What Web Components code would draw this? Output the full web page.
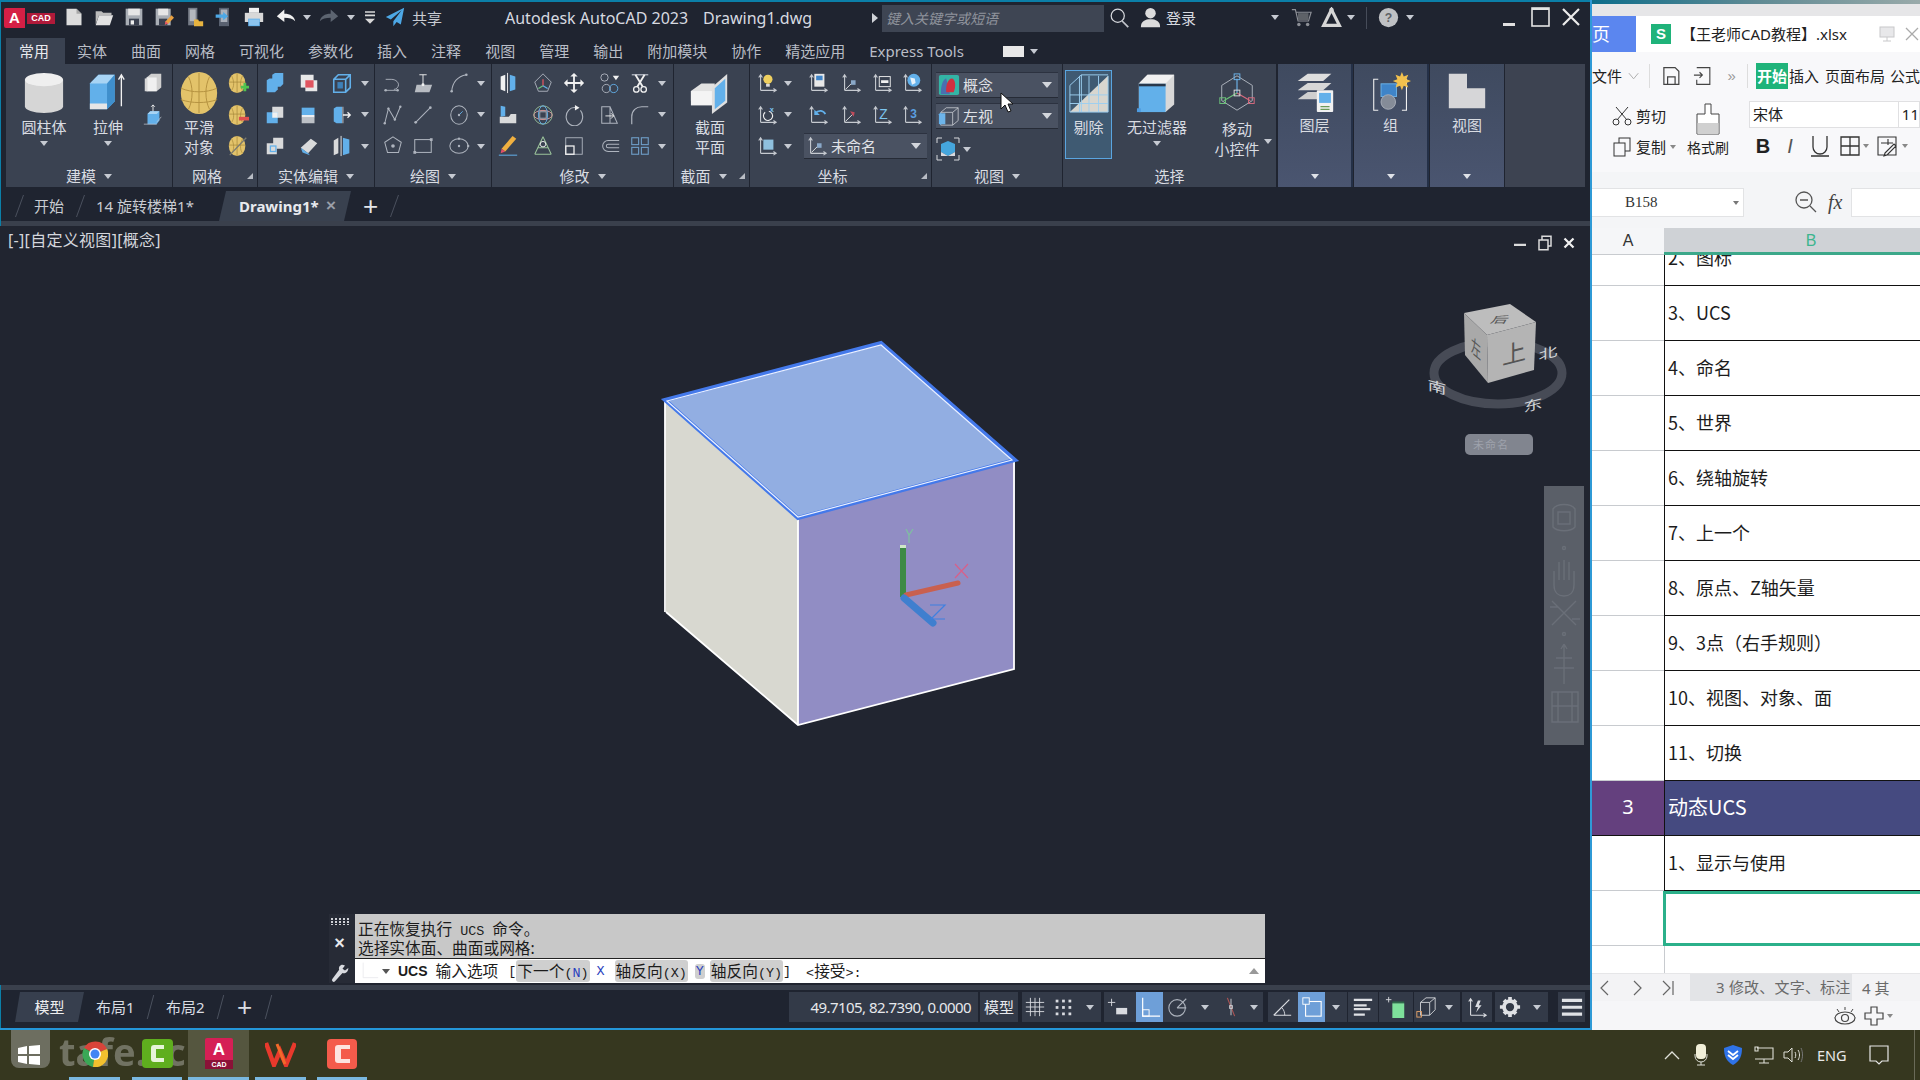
<!DOCTYPE html>
<html lang="zh"><head><meta charset="utf-8"><title>AutoCAD</title>
<style>
html,body{margin:0;padding:0;background:#36371f;width:1920px;height:1080px;overflow:hidden;font-family:"Noto Sans","Noto Sans CJK SC",sans-serif;}
</style>
<script>
const g='#d9dadb',b='#62b0ea',l='#aeb4be',y='#e3c36a',w='#f1f1f1',t='#8f98a6';
const st=(d,c=l,sw=1.3)=>`<path d="${d}" fill="none" stroke="${c}" stroke-width="${sw}"/>`;
const fi=(d,c=g)=>`<path d="${d}" fill="${c}"/>`;
const ballBase=`<ellipse cx="11" cy="12" rx="9" ry="11" fill="${y}"/>`+st('M2 11h18M11 1v22M5 4c3 6 3 12 0 16M17 4c-3 6-3 12 0 16','#a98a3c',.8);
const ucsA=st('M5 20V4M3 6l2-3 2 3M5 20h16M19 18l3 2-3 2','#c6cad0',1.2);
const I={
/* big icons, 44 box */
cyl:[44,fi('M2 8v28c0 4 9 7 20 7s20-3 20-7V8z','#d6d6d6')+`<ellipse cx="22" cy="8" rx="20" ry="7" fill="#efefef"/>`],
ext:[44,fi('M3 12L12 3h17v28l-8 8H3z',b)+fi('M3 12L12 3h17l-8 9z','#a8d4f4')+fi('M21 12l8-9v28l-8 8z','#3f8fcc')+fi('M3 33h18v6H3z','#e6e6e6')+st('M36 36V4M33 8l3-5 3 5',w,1.4)],
ball:[44,`<ellipse cx="22" cy="22" rx="19" ry="22" fill="${y}"/>`+st('M3 17c12 5 26 5 38 0M3 29c12 4 26 4 38 0M22 1v42M11 5c5 10 5 24 0 34M33 5c-5 10-5 24 0 34','#b3913f',1)],
sect:[44,fi('M2 20l11-8h14v18H2z','#e2e2e2')+fi('M2 20h25v15H2z','#f4f4f4')+fi('M24 16L40 2v30L24 44z','#dfdfdf')+fi('M27 17L38 7v23L27 39z',b)],
cull:[44,fi('M2 42L42 4v38z','#d8d6cf')+st('M2 14L14 3h28M2 14v28h40V4M2 24h40M2 33h40M12 4v38M22 4v38M32 4v38M14 3v39','#9ccff0',1)],
nof:[44,fi('M3 12l9-9h28v31l-9 8H3z','#d8d8d8')+fi('M3 12h28v30H3z',b)+fi('M3 12h28v3H3z','#28384c')+fi('M3 12l9-9h28l-9 9z',w)+fi('M1 38h4v4H1z','#4d9be0')],
giz:[44,st('M22 4l16 10v16L22 40 6 30V14z','#aeb4be',1)+st('M22 22V7','#6db4ea',1.2)+st('M22 22L8 30','#6cc27a',1.2)+st('M22 22l14 8','#d86a7e',1.2)+`<rect x="19" y="2" width="6" height="6" fill="none" stroke="#6db4ea"/><rect x="19" y="19" width="6" height="6" fill="none" stroke="#ddd"/><rect x="4" y="27" width="6" height="6" fill="none" stroke="#6cc27a"/><rect x="34" y="27" width="6" height="6" fill="none" stroke="#d86a7e"/>`],
lay:[44,fi('M3 30L14 22h26l-9 8z','#cfcfcf')+fi('M3 20L14 12h26l-9 8z','#d7d7d7')+fi('M3 10L14 2h26l-9 8z','#dedede')+`<rect x="24" y="20" width="18" height="24" rx="1" fill="#f1f1f1"/><rect x="26.5" y="23" width="13" height="11" fill="${b}"/><path d="M28 38h10M28 41h10" stroke="#6a9a5a" stroke-width="1.4"/>`],
grp:[44,st('M8 8H3v34h5M34 8h5v34h-5',w,1.2)+`<rect x="11" y="13" width="17" height="14" fill="#3f84c8" stroke="#6db4ea"/><circle cx="19" cy="33" r="8" fill="#858c98" stroke="#aab0ba"/><path d="M34 0l2 5 5-2-2 5 5 2-5 2 2 5-5-2-2 5-2-5-5 2 2-5-5-2 5-2-2-5 5 2z" fill="#f2c14e"/>`],
lshp:[44,fi('M2 2h20v16h20v22H2z','#d6d6d8')],
/* small icons, 24 box */
pres:[24,fi('M5 6l5-4h11v15l-5 4H5z','#cfcfcf')+fi('M5 6h11v15H5z','#f0f0f0')+fi('M3 7h3v14H3z','#d8d8d8')],
pp:[24,fi('M6 11l3-3h10v10l-3 4H6z',b)+fi('M6 11l3-3h10l-3 3z','#a8d4f4')+st('M12 8V1M10 3l2-2 2 2',w,1)+st('M2 22h14M16 20l5-6','#c0c4cc',.8)],
bp:[24,ballBase+fi('M15 15h3v-3h3v3h3v3h-3v3h-3v-3h-3z','#4fc24f')],
bm:[24,ballBase+fi('M13 14h11v4H13z','#e0504f')],
bx:[24,ballBase+st('M3 22L21 3','#7a7a70',1.4)],
un:[24,fi('M9 3l3-2h9v12l-3 3H9z',b)+fi('M3 9l3-2h9v12l-3 3H3z',b)],
su:[24,fi('M3 3h14v14H3z','#e8e8e8')+fi('M8 9h13v12H8z','#e8e8e8')+fi('M8 9h9v8H8z','#e05560')],
wbox:[24,st('M3 8l5-5h13v14l-5 5H3zM3 8h13v14M16 8l5-5',b,1.7)+fi('M7 11h6v7H7z','#3d80b8')],
in1:[24,fi('M9 3h12v12H9z',g)+fi('M3 9h12v12H3z',b)+fi('M9 9h6v6H9z',w)],
bx2:[24,fi('M4 4h14v8H4z',b)+fi('M4 12h14v3H4z','#edeff2')+fi('M4 15h14v6H4z','#bcc0c6')],
arr:[24,fi('M3 5l3-2h6v18H6l-3 -2z',b)+st('M13 12h8M18 9l3 3-3 3',w,1.4)+st('M13 3v18',w,.8)],
cp1:[24,fi('M10 3h11v12H10z',g)+fi('M3 9h11v12H3z',g)+`<rect x="7" y="12" width="6" height="6" fill="none" stroke="${b}" stroke-width="1.4"/>`],
ers:[24,fi('M3 14L14 4l7 5-10 11z',g)+fi('M3 14l8 6 2 2-8-3z',b)],
spl:[24,fi('M3 6l5-3v17l-5 2z',g)+fi('M13 3l7 2v15l-7 2z',b)+st('M11 1v22',w,1)],
parc:[24,st('M3 20h14M4 8h6c6 0 8 4 8 6s-2 5-5 5',l,1)+`<circle cx="4" cy="20" r="1.4" fill="${l}"/><circle cx="17" cy="20" r="1.4" fill="${l}"/>`],
plane:[24,fi('M5 14L3 22h16l3-8z','#b8bcc2')+st('M12 14V3M8 3h8',w,1)+`<circle cx="12" cy="14" r="1.6" fill="${w}"/>`],
arc:[24,st('M4 21C5 11 10 5 20 3',l,1.1)+`<circle cx="4" cy="21" r="1.4" fill="${l}"/><circle cx="20" cy="3" r="1.4" fill="${l}"/>`],
pl:[24,st('M3 21L7 5l7 12 6-14',l,1.1)+`<circle cx="7" cy="5" r="1.3" fill="${l}"/><circle cx="14" cy="17" r="1.3" fill="${l}"/><circle cx="3" cy="21" r="1.3" fill="${l}"/><circle cx="20" cy="3" r="1.3" fill="${l}"/>`],
lin:[24,st('M4 20L20 4',l,1.1)+`<circle cx="4" cy="20" r="1.5" fill="${l}"/><circle cx="20" cy="4" r="1.5" fill="${l}"/>`],
cir:[24,`<ellipse cx="12" cy="12" rx="9" ry="10" fill="none" stroke="${l}" stroke-width="1.1"/><path d="M12 12l4-4" stroke="${b}"/><circle cx="12" cy="12" r="1.3" fill="${l}"/>`],
pen:[24,st('M12 2l9 6-3 11H6L3 8z',l,1.1)+`<circle cx="12" cy="12" r="2" fill="${l}"/>`],
rec:[24,`<rect x="3" y="5" width="18" height="14" fill="none" stroke="${l}" stroke-width="1.1"/><rect x="1.5" y="17.5" width="3" height="3" fill="${l}"/><rect x="19.5" y="3.5" width="3" height="3" fill="${l}"/>`],
elp:[24,`<ellipse cx="12" cy="12" rx="10" ry="8" fill="none" stroke="${l}" stroke-width="1.1"/><circle cx="12" cy="12" r="1.3" fill="${l}"/><circle cx="12" cy="4" r="1.3" fill="${l}"/><circle cx="22" cy="12" r="1.3" fill="${l}"/>`],
mir:[24,fi('M4 5l5-2v18l-5-2z',w)+fi('M14 3l6 2v14l-6 2z',b)+st('M11.500 1v22',w,1)],
m3d:[24,st('M12 2L3 11l4 10h10l4-10z',l,1)+st('M12 8v7',"#e05560",1.4)+st('M12 15l-5 3',"#6cc27a",1.4)+st('M12 15l5 3',b,1.4)],
mov:[24,fi('M12 1l4 4h-3v6h6V8l4 4-4 4v-3h-6v6h3l-4 4-4-4h3v-6H5v3l-4-4 4-4v3h6V5H8z',w)],
cop:[24,`<circle cx="6" cy="6" r="4" fill="none" stroke="${l}"/><circle cx="8" cy="18" r="4.500" fill="none" stroke="${l}"/><circle cx="16" cy="18" r="4.500" fill="none" stroke="${b}"/>`+fi('M15 4h7l-3.500 5z',w)],
tri:[24,st('M3 3h18',l,1.5)+st('M7 3l8 13M17 3L9 16',w,2)+`<circle cx="8" cy="19" r="3" fill="none" stroke="${w}" stroke-width="1.4"/><circle cx="16" cy="19" r="3" fill="none" stroke="${w}" stroke-width="1.4"/>`],
ali:[24,fi('M4 2l5 1v10l-5 1z',b)+fi('M3 14h10l2-3h6v10H3z',g)],
r3d:[24,`<circle cx="12" cy="12" r="10" fill="none" stroke="#9bc49b" stroke-width="1"/><ellipse cx="12" cy="12" rx="10" ry="5" fill="none" stroke="#d89a9a" stroke-width="1"/><ellipse cx="12" cy="12" rx="5" ry="10" fill="none" stroke="${b}" stroke-width="1"/><rect x="8.500" y="8.500" width="7" height="7" fill="none" stroke="${l}"/>`],
rot:[24,st('M19 7a9 10 0 1 1-5-3',l,1.2)+fi('M13 1l5 3-5 3z',w)],
str:[24,st('M3 3h9v18H3zM12 3l8 18h-8',l,1.1)+st('M7 13h9M13 10l3 3-3 3',w,1)],
fil:[24,st('M3 22V14C3 7 8 3 14 3h7',l,1.3)],
pcl:[24,fi('M17 1l4 3L9 18l-4-3z','#f0b040')+fi('M5 15l4 3-5 2z','#e2506a')+st('M2 22h20',b,1.1)],
tgl:[24,st('M12 2L3 21M12 2l9 19M6 14h12M3 21h18',"#9bc49b",1.1)+`<circle cx="12" cy="10" r="3" fill="none" stroke="${w}"/>`],
scl:[24,`<rect x="3" y="3" width="18" height="18" fill="none" stroke="${l}"/><rect x="3" y="12" width="9" height="9" fill="none" stroke="${w}" stroke-width="1.4"/>`],
ofs:[24,st('M22 6H10a6 6 0 0 0 0 12h12M22 10H10a2 2 0 0 0 0 4h12',l,1.1)],
ary:[24,`<g fill="none" stroke="#6f9ec8" stroke-width="1.2"><rect x="3" y="3" width="7.500" height="7.500"/><rect x="13.500" y="3" width="7.500" height="7.500"/><rect x="3" y="13.500" width="7.500" height="7.500"/><rect x="13.500" y="13.500" width="7.500" height="7.500"/></g>`],
bulb:[24,ucsA+`<circle cx="13" cy="8" r="5" fill="#efd060"/><rect x="11" y="13" width="4" height="3" fill="#ddd"/>`],
dc:[24,ucsA+`<rect x="8" y="2" width="11" height="14" fill="#e8e8e8"/><rect x="10" y="4" width="7" height="5" fill="#3f84c8"/>`],
x1:[24,ucsA+st('M6 19l8-8','#e8e8e8',1)+fi('M12 9h5v5h-5z','#8aa8c8')],
vw:[24,ucsA+`<rect x="9" y="5" width="12" height="11" fill="none" stroke="${w}"/><rect x="11" y="9" width="8" height="3" fill="${w}"/>`],
wd:[24,ucsA+`<circle cx="14" cy="9" r="7" fill="${b}"/><path d="M10 6l5 1 1 5-4 2z" fill="#e6f2fb"/>`],
rx:[24,ucsA+st('M14 8a5 5 0 1 1-4 1',w,1.2)+`<text x="15" y="9" font-size="8" font-weight="700" fill="#7dc6f0" font-family="Liberation Sans">x</text>`],
pv:[24,ucsA+st('M20 11c-2-4-7-5-11-1',b,2)+fi('M8 6v6h6z',b)],
x2:[24,ucsA+st('M6 19l8-8','#e8e8e8',1)+fi('M11 8l5 1-1 5z','#c04a5a')],
zz:[24,ucsA+`<text x="9" y="16" font-size="15" fill="#7dc6f0" font-family="Liberation Sans">Z</text>`],
th:[24,ucsA+`<text x="10" y="15" font-size="13" font-weight="700" fill="#5b9fe0" font-family="Liberation Sans">3</text>`],
bx3:[24,ucsA+fi('M8 5h11v11H8z','#8fc0de')],
und:[24,fi('M1 11l9-8v5c7 0 12 3 13 9-3-3-7-4-13-4v5z',w)],
red:[24,fi('M23 11l-9-8v5C7 8 2 11 1 17c3-3 7-4 13-4v5z','#5c6470')],
mnu:[24,fi('M6 5h12v2H6zM6 9h12v2H6zM6 14h12l-6 6z','#d8d8d8')],
shr:[24,fi('M23 1L1 12l6 3 13-11-10 13v6l4-5 5 3z','#4da8e6')],
nw:[24,fi('M3 2h12l6 6v14H3z','#dcdcdc')+fi('M15 2l6 6h-6z','#a8a8a8')],
opn:[24,fi('M2 5h7l2 2h10v3H6L2 21z','#bbb')+fi('M6 10h17l-4 12H2z','#e2e2e2')],
sav:[24,fi('M2 2h20v20H2z','#a9aeb5')+fi('M5 2h14v8H5z','#e6e6e6')+fi('M6 14h12v8H6z','#3b4150')+fi('M8 16h4v5H8z','#eee')],
sva:[24,fi('M2 2h18v20H2z','#a9aeb5')+fi('M5 2h12v8H5z','#e6e6e6')+fi('M6 14h10v8H6z','#3b4150')+fi('M13 21l1-4 7-7 3 3-7 7z','#e8a040')+fi('M13 21l1-4 3 3z','#e2506a')],
web:[24,fi('M5 1h11v21H5z','#777d88')+fi('M7 3h7v14H7z','#b4b8be')+fi('M12 15h5l1 2h5v6H12z','#e8b440')],
mob:[24,fi('M6 1h12v22H6z','#596170')+fi('M8 3h8v15H8z','#aab0ba')+fi('M2 9h9V6l6 5-6 5v-3H2z','#4da8e6')],
prt:[24,fi('M6 1h12v6H6z','#f0f0f0')+fi('M1 7h22v11H1z','#d8d8d8')+fi('M5 14h14v9H5z',b)+fi('M6 15h12v7H6z','#8cc4ee')],
srch:[24,`<circle cx="10" cy="10" r="7.500" fill="none" stroke="#d8dadf" stroke-width="1.400"/>`+st('M15 16l7 7','#c2c5cb',2)],
usr:[24,`<circle cx="12" cy="7" r="6" fill="#dcdcdc"/>`+fi('M1 23c0-7 5-9 11-9s11 2 11 9z','#dcdcdc')],
cart:[24,st('M1 3h4l3 13h12l3-10H6','#8d9097',1.3)+`<rect x="8" y="7" width="12" height="8" fill="#5e6268"/><circle cx="9" cy="20" r="2" fill="#8d9097"/><circle cx="19" cy="20" r="2" fill="#8d9097"/>`],
a360:[24,`<path d="M12 3L3 21h18z" fill="none" stroke="#d6d6d6" stroke-width="3.600"/><circle cx="12" cy="3.500" r="2.600" fill="#d6d6d6"/>`],
hlp:[24,`<circle cx="12" cy="12" r="11" fill="#bfc1c4"/><text x="12" y="17" text-anchor="middle" font-size="14" fill="#5e6167" font-family="Liberation Sans" font-weight="700">?</text>`],
wmin:[24,fi('M6 18h12v3H6z','#e0e0e0')],
wmax:[24,`<rect x="4" y="3" width="17" height="18" fill="none" stroke="#e4e4e4" stroke-width="1.600"/><path d="M4 4h17" stroke="#e4e4e4" stroke-width="2"/>`],
wcls:[24,st('M4 4l16 16M20 4L4 20','#ececec',2.200)],
vmin:[24,fi('M4 13h16v3H4z','#dcdcdc')],
vres:[24,`<rect x="8" y="3" width="12" height="13" fill="none" stroke="#dcdcdc" stroke-width="2"/><rect x="4" y="8" width="12" height="13" fill="#222631" stroke="#dcdcdc" stroke-width="2"/>`],
vcls:[24,st('M6 6l12 12M18 6L6 18','#f0f0f0',3)],
mcon:[24,`<rect x="1" y="1" width="22" height="22" rx="2" fill="#33b5a6"/>`+fi('M3 22c0-10 3-17 6-17l4 17z','#4a6fb0')+fi('M9 20c-1-7 2-15 6-15s5 9 2 15z','#d03040')],
mwire:[24,st('M3 8l6-5h13v14l-6 5H3zM3 8h13v14M16 8l6-5',"#c6cad0",.9)+fi('M3 8l-2 2v10l2 2z',b)+fi('M2 9h6v12H2z','#6db4ea')],
mcam:[24,`<g stroke="#d8dadf" fill="none"><path d="M1 6V1h5M18 1h5v5M1 18v5h5M18 23h5v-5"/></g><path d="M12 4l7 3v8l-7 4-7-4V7z" fill="#45a6dd"/><path d="M5 15l7 4 7-4v4H5z" fill="#d8dadf"/>`],
/* status */
sgrid:[24,st('M7 2v20M12 2v20M17 2v20M2 7h20M2 12h20M2 17h20','#d9dbe0',1)],
sdot:[24,`<g fill="#d9dbe0"><rect x="4" y="4" width="3" height="3"/><rect x="11" y="4" width="3" height="3"/><rect x="18" y="4" width="3" height="3"/><rect x="4" y="11" width="3" height="3"/><rect x="11" y="11" width="3" height="3"/><rect x="18" y="11" width="3" height="3"/><rect x="4" y="18" width="3" height="3"/><rect x="11" y="18" width="3" height="3"/><rect x="18" y="18" width="3" height="3"/></g>`],
sinf:[24,st('M5 3v8M1 7h8','#d9dbe0',1)+fi('M10 13h12v7H10z','#d9dbe0')],
sort:[24,st('M4 2v20h19','#fff',1.3)+`<rect x="4" y="15" width="7" height="7" fill="none" stroke="#fff"/>`],
spol:[24,`<circle cx="11" cy="13" r="9" fill="none" stroke="#aeb4be" stroke-width="1.200"/>`+st('M11 13L21 3M11 13h10','#aeb4be',1.200)],
siso:[24,st('M8 2l8 20','#b05555',1.200)+st('M12 3v18','#d0d2d6',1)+`<rect x="10.500" y="10.500" width="3" height="3" fill="none" stroke="#d0d2d6"/>`],
sang:[24,st('M3 21L20 4M3 21h19','#d9dbe0',1.300)+st('M12 13c2 2 3 5 3 8','#d9dbe0',1)],
ssel:[24,`<rect x="5" y="6" width="17" height="16" fill="none" stroke="#fff" stroke-width="1.200"/><rect x="2" y="2" width="7" height="7" fill="#6ea0d8" stroke="#fff"/>`],
slin:[24,fi('M2 3h20v2.500H2zM2 9h14v2.500H2zM2 13h18v2.500H2zM2 19h12v2.500H2z','#dfe1e5')],
sgrn:[24,st('M4 1v6M1 4h6','#d9dbe0',1)+fi('M8 6h13v2H8z','#2e6a4a')+fi('M8 8h13v16H8z','#7ee09b')],
scub:[24,st('M6 7l6-5h10v13l-6 6H6zM6 7h10v14M16 7l6-5','#d0d2d6',1)+`<rect x="2" y="17" width="5" height="6" fill="none" stroke="#e8a46a"/>`],
sucs:[24,st('M5 21V3M3 6l2-3 2 3M5 21h17M19 19l3 2-3 2','#d9dbe0',1.200)+fi('M13 5l-3 7h3l-2 6 6-8h-3l2-5z','#d9dbe0')],
sgear:[24,`<circle cx="12" cy="12" r="6.500" fill="none" stroke="#dfe1e5" stroke-width="4"/><path d="M10 1h4v4h-4zM10 19h4v4h-4zM1 10h4v4H1zM19 10h4v4h-4zM4 6l3-3 3 3-3 3zM14 6l3-3 3 3-3 3zM4 18l3-3 3 3-3 3zM14 18l3-3 3 3-3 3z" fill="#dfe1e5"/>`],
sham:[24,fi('M1 3h22v3.500H1zM1 10.500h22v3.500H1zM1 18h22v3.500H1z','#e0e2e6')],
wrn:[24,fi('M15 2c-3 0-5 3-4 6L3 19a2 2 0 0 0 3 3l9-10c3 1 7-1 7-6l-4 3-3-2 3-4z','#d8dadf')],
cmdi:[24,st('M5 2v18h18','#e8e8ec',1)]
};
function def(tag,css,render){customElements.define(tag,class extends HTMLElement{connectedCallback(){if(this.shadowRoot)return;const r=this.attachShadow({mode:'open'});r.innerHTML=`<style>${css}</style>`+render(this);}});}
const A=(e,n,d='')=>e.getAttribute(n)??d;

def('cad-icon',':host{display:inline-flex;flex:none}svg{display:block}',e=>{const i=I[A(e,'name')]||[24,''];const s=A(e,'size','22');return `<svg width="${s}" height="${s}" viewBox="0 0 ${i[0]} ${i[0]}">${i[1]}</svg>`;});
def('cad-caret',':host{display:block;flex:none;width:0;height:0;border:4px solid transparent;border-bottom:0;border-top:5px solid var(--c,#c6cad2)}',()=>'');
def('ic-row',`:host{display:grid;align-self:flex-start;grid-auto-rows:var(--rowh,31.5px);align-items:center;justify-items:center}
.on{display:flex;width:100%;height:100%;align-items:center;justify-content:center;background:#6e9fd8}::slotted(*){justify-self:stretch}`,e=>{
 const cols=A(e,'cols').split(/\s+/).map(x=>x+'px').join(' ');const s=A(e,'size','22');
 const cell=k=>{if(k==='_')return '<span></span>';if(k==='v')return '<cad-caret></cad-caret>';if(k[0]==='!')return `<div class="on"><cad-icon name="${k.slice(1)}" size="${s}"></cad-icon></div>`;return `<cad-icon name="${k}" size="${s}"></cad-icon>`;};
 return `<style>:host{grid-template-columns:${cols}}</style>`+A(e,'icons').trim().split(/\s+/).map(cell).join('')+'<slot></slot>';});

def('cad-window',`:host{display:flex;flex-direction:column;position:relative;width:1590px;height:1030px;flex:none;background:#1f2430;color:#d9dce2;overflow:hidden}
.bt{position:absolute;left:0;right:0;top:0;height:2px;background:#0b7fa8}.bl{position:absolute;left:0;top:0;bottom:0;width:1px;background:#0b7fa8}.bb{position:absolute;left:0;right:0;bottom:0;height:2px;background:#2496d8}
.cur{position:absolute;left:1000px;top:92px}`,()=>`<div class="bt"></div><div class="bl"></div><div class="bb"></div><slot></slot>
<svg class="cur" width="14" height="22" viewBox="0 0 14 22"><path d="M1 1v16l4-4 3 7 3-1-3-7h5z" fill="#fff" stroke="#111" stroke-width="1"/></svg>`);

def('title-bar',`:host{display:flex;align-items:center;height:36px;margin-top:2px;padding-bottom:4px;box-sizing:border-box;flex:none;font-size:15px;line-height:20px;color:#d7dae0;--rowh:30px}
.logo{width:59px;display:flex;align-items:center;flex:none;padding-left:4px;box-sizing:border-box}
.a{width:21px;height:20px;background:#d51f45;color:#fff;font:700 15px/20px "Liberation Sans";text-align:center;border-radius:2px 0 0 2px}
.cad{margin-left:2px;width:28px;height:11px;background:#b01a3a;color:#fff;font:700 9px/11px "Liberation Sans";text-align:center}
.sh{margin-left:7px;width:30px;white-space:nowrap;color:#c9ccd2}
.t1{margin-left:63px;width:198px;font-size:16px;white-space:nowrap}.t2{width:169px;font-size:16px;white-space:nowrap}
.tri{width:0;height:0;border:5px solid transparent;border-left:6px solid #d0d3d8;border-right:0;margin-right:4px}
.s{margin-left:0;width:222px;height:27px;background:#3e4553;font-style:italic;font-size:14px;line-height:27px;color:#8f939c;padding-left:4px;box-sizing:border-box;flex:none}
.in{width:103px;flex:none;white-space:nowrap}.sp{width:1px;height:22px;background:#464c59;margin:0 5px}`,()=>`
<div class="logo"><div class="a">A</div><div class="cad">CAD</div></div>
<ic-row size="20" cols="30 30 30 30 30 30 30 34 8 36 8 30 20" icons="nw opn sav sva web mob prt und v red v mnu shr"></ic-row>
<div class="sh">共享</div><div class="t1">Autodesk AutoCAD 2023</div><div class="t2">Drawing1.dwg</div><div class="tri"></div>
<div class="s">键入关键字或短语</div>
<ic-row size="21" cols="30 32" icons="srch usr" style="margin-left:0"></ic-row><div class="in" style="font-size:15px">登录</div>
<ic-row size="21" cols="12 40 20 20" icons="v cart a360 v"></ic-row><div class="sp"></div>
<ic-row size="21" cols="32 12" icons="hlp v"></ic-row>
<ic-row size="24" cols="30 32 30" icons="wmin wmax wcls" style="margin-left:78px"></ic-row>`);

def('rb-tabs',`:host{display:flex;height:26px;flex:none;padding-left:6px;font-size:15px;line-height:26px;color:#b9bdc6;white-space:nowrap}
span{padding:0 12px}.on{background:#3a4251;color:#e8eaee;padding:0 16px 0 13px}.box{width:21px;height:11px;background:#e8e8e8;margin:8px 0 0 27px;display:block;padding:0}.c{margin:11px 0 0 6px}`,()=>`
<span class="on">常用</span><span>实体</span><span>曲面</span><span>网格</span><span>可视化</span><span>参数化</span><span>插入</span><span>注释</span><span>视图</span><span>管理</span><span>输出</span><span>附加模块</span><span>协作</span><span>精选应用</span><span>Express Tools</span><span class="box"></span><cad-caret class="c"></cad-caret>`);

def('rb-ribbon',':host{display:flex;height:123px;flex:none;padding:0 5px 0 6px;background:#1f2430}.f{flex:1;background:#3d4351}',()=>'<slot></slot><div class="f"></div>');
def('rb-panel',`:host{display:flex;flex-direction:column;flex:none;height:123px;background:#3a4251;margin-right:1px;box-sizing:border-box}
:host([light]){background:linear-gradient(#3f4a5f,#4a5570);border-right:2px solid #243047;margin-right:1px}
.b{height:101px;display:flex;align-items:flex-start;flex:none}
.f{height:22px;display:flex;align-items:center;justify-content:center;gap:8px;font-size:15px;line-height:22px;position:relative;color:#d9dce2;box-sizing:border-box}
:host([launch]) .f{padding-right:16px}
.l{position:absolute;right:4px;top:8px;width:0;height:0;border:3px solid #b8bcc4;border-left-color:transparent;border-top-color:transparent}
:host([light]) .f{--c:#dfe2e8}`,e=>`<style>:host{width:${A(e,'w')}px}</style><div class="b"><slot></slot></div>
<div class="f">${A(e,'label')?`<span>${A(e,'label')}</span>`:''}${e.hasAttribute('drop')?'<cad-caret></cad-caret>':''}${e.hasAttribute('launch')?'<i class="l"></i>':''}</div>`);
def('rb-big',`:host{display:flex;flex-direction:column;align-items:center;flex:none;box-sizing:border-box;padding-top:8px;height:101px;position:relative;font-size:15px;line-height:20px;color:#d9dce2}
:host([active]){height:89px;margin-top:6px;padding-top:2px;background:#3f5a72;outline:1px solid #5aa5e0;outline-offset:-1px}
.t{margin-top:3px;text-align:center;white-space:pre-line}:host([side]) .t{margin-top:5px}
cad-caret{position:absolute;left:50%;margin-left:-4px;top:77px}:host([side]) cad-caret{left:auto;right:0;top:75px}`,e=>`<style>:host{width:${A(e,'w')}px}</style><cad-icon name="${A(e,'icon')}" size="${A(e,'size','42')}"></cad-icon><div class="t">${A(e,'label').replace(/\|/g,'\n')}</div>${e.hasAttribute('drop')?'<cad-caret></cad-caret>':''}`);
def('rb-combo',`:host{display:flex;align-items:center;height:26px;box-sizing:border-box;background:#4a5262;border-bottom:1px solid #262b36;border-top:1px solid #2c3240;font-size:15px;line-height:24px;color:#e0e2e7;--c:#d3d6dc}
.x{flex:1;margin-left:3px;white-space:nowrap}cad-caret{margin-right:6px;border-width:5px;border-top-width:6px;border-bottom-width:0}cad-icon{margin-left:2px}`,e=>`<cad-icon name="${A(e,'icon')}" size="${A(e,'size','22')}"></cad-icon><span class="x">${A(e,'text')}</span><cad-caret></cad-caret>`);

def('doc-tabs',`:host{display:flex;align-items:center;height:30px;flex:none;margin-top:4px;font-size:15px;line-height:30px;color:#c9ccd2;white-space:nowrap;position:relative}
.sl{width:1px;height:22px;background:#4b515e;transform:skewX(-20deg);flex:none}
.on{width:132px;height:30px;margin-left:28px;background:#39414f;clip-path:polygon(7px 0,100% 0,calc(100% - 7px) 100%,0 100%);flex:none;display:flex;align-items:center;font-weight:700;color:#e8eaee;padding-left:20px;box-sizing:border-box}
.x{font:700 17px/30px "Liberation Sans";color:#9a9ea8;margin-left:8px}.p{font:400 26px/30px "Liberation Sans";color:#e4e6ea;margin-left:12px}`,()=>`
<span style="width:19px"></span><i class="sl"></i><span style="margin-left:14px;width:46px">开始</span><i class="sl"></i><span style="margin-left:15px;width:95px">14 旋转楼梯1*</span>
<div class="on"><span style="width:79px">Drawing1*</span><span class="x">×</span></div><span class="p">+</span><i class="sl" style="margin-left:16px"></i>`);
def('cad-bar',':host{display:block;height:5px;flex:none;background:#3a404c}',()=>'');

def('view-port',`:host{display:block;position:relative;height:759px;flex:none;background:#212530}
.lb{position:absolute;left:8px;top:4px;font-size:16px;line-height:20px;color:#d4d6dc;letter-spacing:.3px}
.ct{position:absolute;left:1507px;top:5px}
.cube{position:absolute;left:660px;top:104px}.vc{position:absolute;left:1420px;top:69px}
.pill{position:absolute;left:1465px;top:208px;width:68px;height:21px;border-radius:5px;background:#81858f;font-size:11px;line-height:21px;color:#9ea2ac;text-indent:8px;letter-spacing:1px}
.nav{position:absolute;left:1544px;top:260px;width:40px;height:259px;background:#5a5f68}`,()=>`
<div class="lb">[-][自定义视图][概念]</div>
<ic-row class="ct" style="position:absolute;--rowh:24px" size="18" cols="26 24 24" icons="vmin vres vcls"></ic-row>
<svg class="cube" width="360" height="400" viewBox="660 330 360 400">
<polygon points="665,400 798,518 798,725 666,612" fill="#d8d8d0"/>
<polygon points="798,518 1015,460 1014,669 798,725" fill="#918dc4"/>
<polygon points="665,400 881,343 1015,460 798,518" fill="#92aee2"/>
<path d="M666 612L798 725 1014 669V460M798 518V725M665 400V612" fill="none" stroke="#fff" stroke-width="1.800"/>
<path d="M665 400L881 343 1015 460 798 518z" fill="none" stroke="#4479ea" stroke-width="4"/>
<path d="M667 401L881 345 1012 460 798 517z" fill="none" stroke="#eaf0ff" stroke-width="1.200"/>
<line x1="903" y1="597" x2="903" y2="545" stroke="#3d8a45" stroke-width="6"/><line x1="903" y1="545" x2="903" y2="548" stroke="#cfe8c8" stroke-width="6"/>
<line x1="906" y1="595" x2="958" y2="583" stroke="#c9604f" stroke-width="5" stroke-linecap="round"/>
<line x1="904" y1="598" x2="933" y2="623" stroke="#3f7fcf" stroke-width="7" stroke-linecap="round"/>
<path d="M906 529l3 6 4-6M909 535v8" fill="none" stroke="#7fc0a0" stroke-width="1.200"/>
<path d="M955 564l13 14M968 564l-13 14" fill="none" stroke="#d8608a" stroke-width="1.200"/>
<path d="M930 605h15l-14 14h14" fill="none" stroke="#3f80e0" stroke-width="1.200"/>
</svg>
<svg class="vc" width="160" height="130" viewBox="1420 295 160 130">
<ellipse cx="1498" cy="373" rx="64" ry="31" fill="none" stroke="#474b56" stroke-width="9"/>
<polygon points="1464,313 1510,304 1536,322 1487,335" fill="#bdbdbd"/>
<polygon points="1464,313 1487,335 1488,383 1465,355" fill="#a9a9a9"/>
<polygon points="1487,335 1536,322 1534,370 1488,383" fill="#b4b4b4"/>
<text transform="translate(1514,362) skewY(-14)" font-size="24" fill="#555" text-anchor="middle" font-family="Noto Sans CJK SC">上</text>
<text transform="translate(1498,323) skewX(-30) scale(1,.55)" font-size="17" fill="#555" text-anchor="middle" font-family="Noto Sans CJK SC">后</text>
<text transform="translate(1476,356) skewY(40) scale(.5,1)" font-size="20" fill="#555" text-anchor="middle" font-family="Noto Sans CJK SC">左</text>
<text transform="translate(1548,358) skewY(-15) scale(1,.7)" font-size="19" fill="#d0d2d6" text-anchor="middle" font-family="Noto Sans CJK SC">北</text>
<text transform="translate(1437,392) skewY(15) scale(1,.7)" font-size="19" fill="#d0d2d6" text-anchor="middle" font-family="Noto Sans CJK SC">南</text>
<text transform="translate(1533,410) skewY(-15) scale(1,.7)" font-size="19" fill="#d0d2d6" text-anchor="middle" font-family="Noto Sans CJK SC">东</text>
</svg>
<div class="pill">未命名</div>
<div class="nav"><svg width="40" height="259" viewBox="0 0 40 259"><g fill="none" stroke="#6a6f78" stroke-width="1.400">
<path d="M9 23c4-6 18-6 22 0v18c-4 5-18 5-22 0zM14 26h12v12H14z"/><circle cx="20" cy="62" r="1.500"/>
<path d="M10 85v14c0 8 5 11 10 11s10-3 10-11V85M15 76v18M20 74v20M25 76v18"/>
<path d="M8 115l24 24M32 115L8 139M6 121h8M28 133h8"/><circle cx="20" cy="148" r="1.500"/>
<path d="M20 158v40M12 172h16M10 182h20M20 158l-3 5M20 158l3 5"/>
<path d="M8 206h26v30H8zM14 206v30M28 206v30M8 220h26"/></g></svg></div>
<slot></slot>`);

def('cmd-line',`:host{position:absolute;left:329px;top:688px;width:936px;height:69px;display:flex;font-size:15.700px;color:#1c1c1c}
.s{width:26px;flex:none;background:#272b36;display:flex;flex-direction:column;align-items:center;box-sizing:border-box;padding-right:5px}
.d{width:18px;height:8px;margin-top:4px;background:repeating-linear-gradient(90deg,#cfd1d6 0 2px,transparent 2px 4px);-webkit-mask:repeating-linear-gradient(#000 0 2px,transparent 2px 3px);}
.x{color:#e8e8ec;font:700 18px/24px "Liberation Sans";margin-top:6px}
.m{flex:1;display:flex;flex-direction:column}
.h{height:45px;box-sizing:border-box;background:#c8c8c8;padding:6px 0 0 3px;line-height:18px;border-bottom:1px solid #222}
.h div{white-space:pre}
.i{flex:1;background:#fff;display:flex;align-items:center;white-space:pre;line-height:22px;--c:#555}
i{font:normal 13.400px "Liberation Mono"}.n{color:#2a3fbe}.c{background:#cfcfcf;border-radius:3px;padding:0 1px}
b{font:700 14px "Liberation Sans"}u{margin-left:auto;margin-right:6px;width:0;height:0;border:5px solid transparent;border-top:0;border-bottom:6px solid #999}`,()=>`
<div class="s"><div class="d"></div><div class="x">×</div><cad-icon name="wrn" size="20" style="margin-top:8px"></cad-icon></div>
<div class="m"><div class="h"><div>正在恢复执行<i> UCS </i>命令。</div><div>选择实体面、曲面或网格:</div></div>
<div class="i"><cad-icon name="cmdi" size="20" style="margin-left:4px"></cad-icon><cad-caret style="margin-left:3px"></cad-caret><b style="margin-left:8px">UCS</b><span style="margin-left:8px">输入选项</span><i style="margin-left:10px">[</i><span class="c">下一个<i>(<i class="n">N</i>)</i></span><i class="n" style="margin:0 10px 0 7px">X</i><span class="c">轴反向<i>(X)</i></span><i class="n c" style="margin:0 5px 0 7px">Y</i><span class="c">轴反向<i>(Y)</i></span><i>] </i><span style="margin-left:7px"><i>&lt;</i>接受<i>&gt;:</i></span><u></u></div></div>`);

def('st-bar',`:host{display:flex;align-items:flex-start;height:38px;flex:none;padding:2px 5px 0 0;margin-bottom:0;font-size:15px;line-height:30px;color:#d9dce2;white-space:nowrap;box-sizing:border-box}
.on{margin-left:15px;width:69px;height:30px;background:#373f4e;clip-path:polygon(5px 0,100% 0,calc(100% - 6px) 100%,0 100%);text-align:center;color:#eee;flex:none}
.sl{width:1px;height:24px;margin-top:3px;background:#4b515e;transform:skewX(-15deg);flex:none}
.p{font:400 26px/30px "Liberation Sans";margin:0 16px}
.r{margin-left:auto;display:flex;--rowh:30px}
::slotted(*){background:#333a48}`,()=>`
<div class="on">模型</div><span style="margin-left:12px;width:38px">布局1</span><i class="sl" style="margin-left:16px"></i><span style="margin-left:15px;width:38px">布局2</span><i class="sl" style="margin-left:16px"></i><span class="p">+</span><i class="sl"></i>
<div class="r"><slot></slot></div>`);
def('st-txt',`:host{display:block;height:30px;line-height:30px;font-size:15px;box-sizing:border-box;text-align:right;color:#e6e8ec;flex:none}`,e=>`<style>:host{width:${A(e,'w')}px;padding-right:${A(e,'p','6')}px;letter-spacing:${A(e,'ls','0')}px}</style><slot></slot>`);

def('wps-window',`:host{display:flex;flex-direction:column;width:330px;height:1030px;flex:none;box-sizing:border-box;border-left:2px solid #2f9ad6;background:#fff;color:#222;overflow:hidden;font-size:14px;line-height:20px;white-space:nowrap}
.top{height:4px;background:linear-gradient(90deg,#0d6d8a,#5f8a94 50%,#9aa);flex:none}
.tabs{height:48px;background:#e6e6e8;display:flex;align-items:flex-end;flex:none}
.home{width:46px;height:36px;background:#5b86ef;color:#fff;line-height:36px;font-size:18px;text-align:left;box-sizing:border-box}
.cur{flex:1;height:36px;background:#fff;display:flex;align-items:center;font-size:15px;padding-left:15px}
.s{width:20px;height:20px;background:#1fb37a;color:#fff;font:700 15px/20px "Liberation Sans";text-align:center;margin-right:10px}
.q{height:48px;flex:none;background:#f8f8fa;display:flex;align-items:center;font-size:15px}
.sep{width:1px;height:24px;background:#ddd;flex:none}
.go{background:#1fb37a;color:#fff;font-weight:700;width:34px;height:26px;line-height:26px;text-align:center;margin-left:8px;font-size:15px}
.tb{height:72px;flex:none;background:#f8f8fa;display:flex;position:relative}
.c1{margin-left:20px;width:66px;padding-top:0}.ln{height:31px;display:flex;align-items:center;gap:4px;font-size:15px}
.c2{width:60px;display:flex;flex-direction:column;align-items:center;padding-top:3px;margin-left:0}
.c3{margin-left:11px;width:170px;padding-top:1px}
.fb{height:27px;display:flex;border:1px solid #e0e0e2;background:#fff;line-height:25px;font-size:15px;box-sizing:border-box;width:171px}
.fb span:first-child{width:150px;padding-left:3px;border-right:1px solid #e0e0e2;box-sizing:border-box}
.fm{display:flex;align-items:center;gap:0;height:36px;font:700 20px "Liberation Sans"}
.nm{height:56px;flex:none;background:#f4f5f7;display:flex;align-items:flex-start;padding-top:16px;box-sizing:border-box}
.nb{width:152px;height:29px;background:#fff;border:1px solid #e2e3e5;border-left:0;box-sizing:border-box;font:15px/27px "Liberation Serif";padding-left:33px;color:#333;position:relative}
.fx{font:italic 20px/29px "Liberation Serif";color:#444;margin-left:10px}
.ip{margin-left:9px;flex:1;height:29px;background:#fff;border:1px solid #e2e3e5;border-right:0;box-sizing:border-box}
.hd{height:27px;flex:none;display:flex;font-size:16px;line-height:26px;text-align:center}
.ha{width:72px;background:#f5f6f8;color:#333;font-family:"Liberation Sans";border-bottom:1px solid #c8cbcf;box-sizing:border-box}
.hb{flex:1;background:#cfd2d6;color:#3db58e;border-bottom:3px solid #3ca88a;box-sizing:content-box;height:24px;font-family:"Liberation Sans";padding-left:38px}
.rows{flex:none;display:flex;flex-direction:column}
.tail{height:27px;flex:none;display:flex}.tail i{display:block;width:72px;border-right:1px solid #c8cbcf}
.sb{height:27px;flex:none;background:#f3f3f5;display:flex;align-items:center;color:#6a6a6a;font-size:15px;border-top:1px solid #e6e6e8}
.sh1{width:162px;margin-left:14px;height:27px;background:#e3e4e7;line-height:27px;padding-left:26px;box-sizing:border-box;flex:none;letter-spacing:.2px}
.sh2{margin-left:10px;flex:none}
.bt{flex:1;background:#f6f6f8;display:flex;align-items:center;justify-content:flex-end;padding-right:27px}`,()=>`
<div class="top"></div>
<div class="tabs"><div class="home">页</div><div class="cur"><span class="s">S</span>【王老师CAD教程】.xlsx<svg style="margin-left:31px" width="18" height="18" viewBox="0 0 18 18"><rect x="2" y="2" width="14" height="10" fill="#e8e8ea" stroke="#c8c8ca"/><path d="M9 12v4M5 16h8" stroke="#c8c8ca"/></svg><svg style="margin-left:8px" width="16" height="16" viewBox="0 0 16 16"><path d="M2 2l12 12M14 2L2 14" stroke="#aaa" stroke-width="1.300"/></svg></div></div>
<div class="q"><span style="width:33px">文件</span><svg style="margin:0 10px 0 5px" width="12" height="12" viewBox="0 0 12 12"><path d="M1 3l5 6 5-6" fill="none" stroke="#aaa"/></svg><i class="sep"></i>
<svg style="margin:0 12px 0 12px" width="20" height="22" viewBox="0 0 20 22"><path d="M2 2h12l4 4v14H2zM6 20v-8h8v8" fill="none" stroke="#444" stroke-width="1.300"/></svg>
<svg style="margin-right:16px" width="20" height="22" viewBox="0 0 20 22"><path d="M4 2h14v18H4v-5M1 10h9M7 7l3 3-3 3" fill="none" stroke="#444" stroke-width="1.200"/></svg>
<span style="color:#999;width:21px;font-family:'Liberation Sans'">»</span><i class="sep"></i><span class="go">开始</span><span style="margin-left:1px">插入</span><span style="margin-left:6px">页面布局</span><span style="margin-left:5px">公式</span></div>
<div class="tb">
<div class="c1"><div class="ln"><svg width="20" height="20" viewBox="0 0 20 20"><path d="M4 1l11 13M16 1L5 14" stroke="#333" fill="none"/><circle cx="4" cy="16" r="3" fill="none" stroke="#333"/><circle cx="16" cy="16" r="3" fill="none" stroke="#333"/></svg>剪切</div>
<div class="ln"><svg width="20" height="20" viewBox="0 0 20 20"><rect x="7" y="1" width="11" height="13" fill="none" stroke="#333"/><rect x="2" y="6" width="11" height="13" fill="#f8f8fa" stroke="#333"/></svg>复制<cad-caret style="--c:#888;border-width:3px;border-top-width:4px;margin-left:0"></cad-caret></div></div>
<div class="c2"><svg width="26" height="32" viewBox="0 0 26 32"><path d="M10 1h6v10h8v20H2V11h8z" fill="#fff" stroke="#444"/><rect x="2.500" y="20" width="21" height="11" fill="#d0d0d0"/></svg><span style="margin-top:3px">格式刷</span></div>
<div class="c3"><div class="fb"><span>宋体</span><span style="padding-left:3px">11</span></div>
<div class="fm"><span style="width:28px;text-align:center;margin-left:0">B</span><span style="width:26px;text-align:center;font-weight:400;font-style:italic;color:#555">I</span>
<svg style="margin-left:6px" width="22" height="24" viewBox="0 0 22 24"><path d="M4 2v11a7 7 0 0 0 14 0V2M2 22h18" fill="none" stroke="#333" stroke-width="1.300"/></svg>
<svg style="margin-left:9px" width="20" height="22" viewBox="0 0 20 22"><path d="M1 2h18v18H1zM10 2v18M1 11h18" fill="none" stroke="#333" stroke-width="1.300"/></svg><cad-caret style="--c:#888;border-width:3px;border-top-width:4px;margin:0 4px 0 3px"></cad-caret>
<svg style="margin-left:4px" width="22" height="22" viewBox="0 0 22 22"><path d="M1 2h18v18H1zM4 8h12M11 4v6M8 18l9-9 2 2-9 9-3 1z" fill="none" stroke="#333" stroke-width="1.100"/></svg><cad-caret style="--c:#888;border-width:3px;border-top-width:4px;margin-left:3px"></cad-caret></div></div>
</div>
<div class="nm"><div class="nb">B158<cad-caret style="--c:#777;border-width:3px;border-top-width:4px;position:absolute;right:4px;top:12px"></cad-caret></div>
<svg style="margin:2px 0 0 50px" width="24" height="24" viewBox="0 0 24 24"><circle cx="10" cy="10" r="8" fill="none" stroke="#555" stroke-width="1.300"/><path d="M6 10h8M16 16l6 6" stroke="#555" stroke-width="1.300"/></svg><span class="fx">fx</span><div class="ip"></div></div>
<div class="hd"><div class="ha">A</div><div class="hb">B</div></div>
<div class="rows"><slot></slot></div>
<div class="tail"><i></i></div>
<div class="sb"><svg style="margin-left:4px" width="80" height="18" viewBox="0 0 80 18"><path d="M12 2L5 9l7 7M38 2l7 7-7 7M67 2l7 7-7 7M77 2v14" fill="none" stroke="#666" stroke-width="1.200"/></svg><span class="sh1">3 修改、文字、标注</span><span class="sh2">4 其</span></div>
<div class="bt"><svg width="22" height="20" viewBox="0 0 22 20"><ellipse cx="11" cy="12" rx="10" ry="6" fill="none" stroke="#444" stroke-width="1.200"/><circle cx="11" cy="12" r="3.500" fill="none" stroke="#444" stroke-width="1.200"/><path d="M11 1v3M3 3l2 3M19 3l-2 3" stroke="#444"/></svg>
<svg style="margin-left:8px" width="20" height="20" viewBox="0 0 20 20"><path d="M7 1h6v6h6v6h-6v6H7v-6H1V7h6z" fill="none" stroke="#444" stroke-width="1.200"/></svg><cad-caret style="--c:#888;border-width:3px;border-top-width:4px;margin-left:3px"></cad-caret></div>`);

def('sheet-row',`:host{display:block;flex:none;height:55px;overflow:hidden}
:host([clip]){height:31px}.w{display:flex;height:55px;font-size:18px;line-height:52px;font-family:"Noto Sans CJK SC",sans-serif;color:#1c1c1c}
:host([clip]) .w{margin-top:-24px}
.a{width:72px;text-align:center;box-sizing:border-box;border-bottom:1px solid #c8cbcf}
.b{flex:1;border-left:1px solid #111;border-bottom:1px solid #111;padding-left:3px;box-sizing:border-box}
:host([hl]) .w{font-size:20px}
:host([hl]) .a{background:#64407e;color:#fff;border-bottom-color:#111;font-family:"Noto Sans"}
:host([hl]) .b{background:#454a80;color:#fff}
:host([sel]) .b{border:3px solid #2bb08a;border-right:0;margin-left:-1px}`,e=>`<div class="w"><div class="a">${A(e,'a')}</div><div class="b">${A(e,'t')}</div></div>`);

def('task-bar',`:host{display:flex;height:50px;width:1920px;flex:none;background:#36371f;position:relative;color:#e8e8e8;--rowh:50px}
.wm{position:absolute;left:11px;top:0;display:flex;align-items:flex-start;color:#7c7d6e;font:700 38px/42px "Noto Sans";opacity:.85;pointer-events:none}
.wm i{display:block;width:39px;height:38px;background:#77786c;border-radius:0 0 8px 8px;margin-right:9px}
.app{position:relative;display:flex;align-items:center;justify-content:center;height:50px;box-sizing:border-box;border-bottom:3px solid #7ab8e0;flex:none}
.tray{margin-left:auto;display:flex;align-items:center;height:50px}`,()=>`
<div class="wm"><i></i><span>tafe.cc</span></div>
<svg style="margin:15px 0 0 18px;position:relative;flex:none" width="22" height="20" viewBox="0 0 22 20"><path d="M0 3l9-2v8H0zM11 1l11-1v9H11zM0 11h9v8l-9-2zM11 11h11v9l-11-1z" fill="#fff"/></svg>
<div class="app" style="margin-left:29px;width:51px"><svg width="26" height="26" viewBox="0 0 26 26"><path d="M13 13L2 7A13 13 0 0 1 25 8z" fill="#d8443a"/><path d="M13 13L2 7A13 13 0 0 0 11 26z" fill="#3aa856"/><path d="M13 13L25 8A13 13 0 0 1 11 26z" fill="#f2c02e"/><circle cx="13" cy="13" r="6" fill="#fff"/><circle cx="13" cy="13" r="4.500" fill="#4285f4"/></svg></div>
<div class="app" style="margin-left:12px;width:50px"><svg width="31" height="29" viewBox="0 0 31 29"><rect width="31" height="29" rx="4" fill="#5fae1e"/><path d="M22 6H12a3 3 0 0 0-3 3v11a3 3 0 0 0 3 3h10v-4h-8V10h8z" fill="#e6f4d8"/></svg></div>
<div class="app" style="margin-left:6px;width:61px;background:#55563f"><svg width="28" height="31" viewBox="0 0 28 31"><rect width="28" height="31" rx="2" fill="#d51f55"/><rect y="22" width="28" height="9" fill="#8a1237"/><text x="14" y="17" text-anchor="middle" font-family="Liberation Sans" font-weight="700" font-size="17" fill="#fff">A</text><text x="14" y="29" text-anchor="middle" font-family="Liberation Sans" font-weight="700" font-size="7" fill="#fff">CAD</text></svg></div>
<div class="app" style="margin-left:6px;width:51px"><svg width="31" height="26" viewBox="0 0 31 26"><path d="M1 2l8 22 6-14 6 14 9-22" fill="none" stroke="#e8392c" stroke-width="4.500"/><path d="M12 3l8 20" stroke="#f26a2a" stroke-width="3"/></svg></div>
<div class="app" style="margin-left:11px;width:50px"><svg width="30" height="30" viewBox="0 0 30 30"><rect width="30" height="30" rx="4" fill="#f45b4b"/><path d="M23 6H11a3 3 0 0 0-3 3v12a3 3 0 0 0 3 3h12v-4h-9V10h9z" fill="#fde3df"/></svg></div>
<div class="tray"><svg width="16" height="9" viewBox="0 0 16 9"><path d="M1 8l7-7 7 7" fill="none" stroke="#dfe0d8" stroke-width="1.300"/></svg>
<svg style="margin-left:14px" width="14" height="22" viewBox="0 0 14 22"><rect x="2" y="0" width="10" height="15" rx="4" fill="#f1efd8"/><path d="M1 10v2a6 6 0 0 0 12 0v-2M7 18v3M3 21h8" fill="none" stroke="#dfe0d8"/></svg>
<svg style="margin-left:15px" width="20" height="20" viewBox="0 0 20 20"><path d="M10 0l9 3c0 8-2 13-9 17C3 16 1 11 1 3z" fill="#2f73e8"/><path d="M5 6l5 4 5-4M5 10l5 4 5-4" fill="none" stroke="#fff" stroke-width="1.800"/></svg>
<svg style="margin-left:10px" width="21" height="18" viewBox="0 0 21 18"><path d="M4 2h16v11H2M2 1h3v4H2zM11 13v4M6 17h10" fill="none" stroke="#dfe0d8" stroke-width="1.100"/></svg>
<svg style="margin-left:9px" width="21" height="18" viewBox="0 0 21 18"><path d="M1 6h4l4-4v14l-4-4H1zM12 6c1 2 1 4 0 6M15 4c2 3 2 7 0 10" fill="none" stroke="#dfe0d8"/><path d="M18 2c2 4 2 10 0 14" fill="none" stroke="#777"/></svg>
<span style="margin-left:13px;font-size:14.500px;width:40px">ENG</span>
<svg style="margin-left:12px" width="20" height="20" viewBox="0 0 20 20"><path d="M1 1h18v15h-6l-3 3-3-3H1z" fill="none" stroke="#e8e8e8" stroke-width="1.200"/></svg>
<i style="display:block;width:1px;height:50px;background:#6a6a58;margin:0 5px 0 25px"></i></div>`);
</script></head>
<body>
<div style="display:flex;flex-wrap:wrap;width:1920px">
<cad-window>
<title-bar></title-bar>
<rb-tabs></rb-tabs>
<rb-ribbon>
 <rb-panel w="166" label="建模" drop>
  <rb-big w="76" icon="cyl" label="圆柱体" drop></rb-big><rb-big w="52" icon="ext" label="拉伸" drop></rb-big>
  <ic-row cols="38" style="margin-top:3.5px" icons="pres pp"></ic-row>
 </rb-panel>
 <rb-panel w="84" label="网格" launch>
  <rb-big w="52" icon="ball" label="平滑|对象"></rb-big><ic-row cols="25" style="margin-top:3.5px" icons="bp bm bx"></ic-row>
 </rb-panel>
 <rb-panel w="116" label="实体编辑" drop>
  <ic-row cols="34 34 32 14" style="margin-top:3.5px" icons="un su wbox v in1 bx2 arr v cp1 ers spl v"></ic-row>
 </rb-panel>
 <rb-panel w="116" label="绘图" drop>
  <ic-row cols="30 30 6 30 14" style="margin:3.5px 0 0 3px" icons="parc plane _ arc v pl lin _ cir v pen rec _ elp v"></ic-row>
 </rb-panel>
 <rb-panel w="181" label="修改" drop>
  <ic-row cols="28 6 30 32 4 32 28 16" style="margin:3.5px 0 0 2px" icons="mir _ m3d mov _ cop tri v ali _ r3d rot _ str fil v pcl _ tgl scl _ ofs ary v"></ic-row>
 </rb-panel>
 <rb-panel w="75" label="截面" drop launch><rb-big w="72" icon="sect" label="截面|平面"></rb-big></rb-panel>
 <rb-panel w="181" label="坐标" launch>
  <div style="margin:3.500px 0 0 2px">
  <ic-row cols="30 12 9 30 36 26 34" icons="bulb v _ dc x1 vw wd rx v _ pv x2 zz th"></ic-row>
  <ic-row cols="30 12 10 123" icons="bx3 v _"><rb-combo icon="x1" text="未命名"></rb-combo></ic-row>
  </div>
 </rb-panel>
 <rb-panel w="130" label="视图" drop>
  <div style="margin:8px 0 0 4px;width:122px;display:flex;flex-direction:column;gap:5px">
   <rb-combo icon="mcon" text="概念"></rb-combo><rb-combo icon="mwire" text="左视"></rb-combo>
   <ic-row cols="24 14" style="margin-left:0;--rowh:30px" size="24" icons="mcam v"></ic-row>
  </div>
 </rb-panel>
 <rb-panel w="213" label="选择">
  <rb-big w="47" icon="cull" label="剔除" active style="margin-left:2px"></rb-big>
  <rb-big w="90" icon="nof" label="无过滤器" drop></rb-big>
  <rb-big w="70" icon="giz" label="移动|小控件" drop side></rb-big>
 </rb-panel>
 <rb-panel w="75" light drop style="margin-left:1px"><rb-big w="73" icon="lay" label="图层" size="40"></rb-big></rb-panel>
 <rb-panel w="75" light drop><rb-big w="73" icon="grp" label="组" size="40"></rb-big></rb-panel>
 <rb-panel w="74" light drop style="border-right:0"><rb-big w="74" icon="lshp" label="视图" size="40"></rb-big></rb-panel>
</rb-ribbon>
<doc-tabs></doc-tabs>
<cad-bar></cad-bar>
<view-port><cmd-line></cmd-line></view-port>
<cad-bar></cad-bar>
<st-bar>
 <st-txt w="189" p="7" ls="-.55">49.7105, 82.7390, 0.0000</st-txt>
 <st-txt w="38" p="4" style="margin-left:2px">模型</st-txt>
 <ic-row cols="26 30 23" style="margin-left:4px" icons="sgrid sdot v"></ic-row>
 <ic-row cols="28 4 27 30 24 28 18" style="margin-left:3px" icons="sinf _ !sort spol v siso v"></ic-row>
 <ic-row cols="28 2 27 22" style="margin-left:5px" icons="sang _ !ssel v"></ic-row>
 <ic-row cols="30" style="margin-left:1px" icons="slin"></ic-row>
 <ic-row cols="34" style="margin-left:1px" icons="sgrn"></ic-row>
 <ic-row cols="24 22" style="margin-left:1px" icons="scub v"></ic-row>
 <ic-row cols="30" style="margin-left:2px" icons="sucs"></ic-row>
 <ic-row cols="30 23" style="margin-left:3px" icons="sgear v"></ic-row>
 <ic-row cols="27" style="margin-left:10px" icons="sham"></ic-row>
</st-bar>
</cad-window>
<wps-window>
 <sheet-row clip t="2、图标"></sheet-row>
 <sheet-row t="3、UCS"></sheet-row><sheet-row t="4、命名"></sheet-row><sheet-row t="5、世界"></sheet-row>
 <sheet-row t="6、绕轴旋转"></sheet-row><sheet-row t="7、上一个"></sheet-row><sheet-row t="8、原点、Z轴矢量"></sheet-row>
 <sheet-row t="9、3点（右手规则）"></sheet-row><sheet-row t="10、视图、对象、面"></sheet-row><sheet-row t="11、切换"></sheet-row>
 <sheet-row hl a="3" t="动态UCS"></sheet-row><sheet-row t="1、显示与使用"></sheet-row><sheet-row sel t=""></sheet-row>
</wps-window>
<task-bar></task-bar>
</div>
</body></html>
